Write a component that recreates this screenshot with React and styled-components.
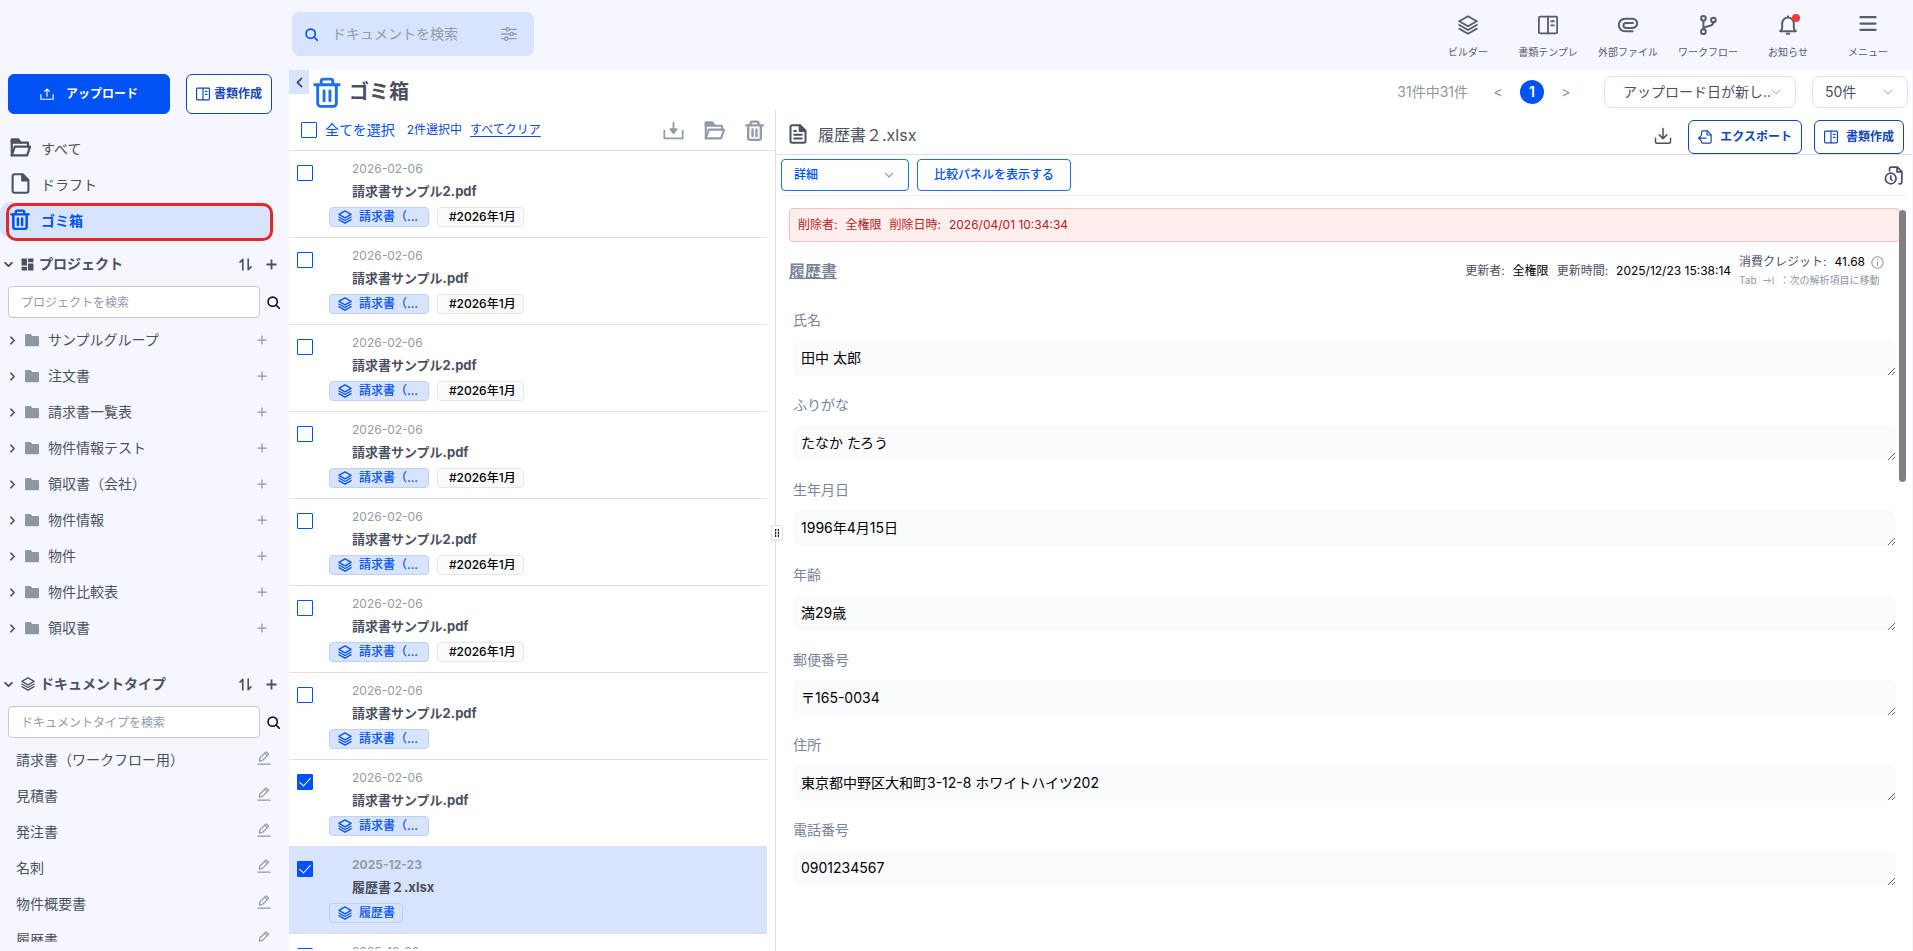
import React, { useState } from "react"
import styled, { createGlobalStyle, css } from "styled-components"

const GlobalStyle = createGlobalStyle`
  * {
    box-sizing: border-box;
  }
  body {
    margin: 0;
    background: #f5f6ff;
    color: #4b5162;
    font-family: Inter, "Noto Sans CJK JP", sans-serif;
    font-size: 14px;
    line-height: 20px;
  }
  button, input, select, textarea {
    font: inherit;
    color: inherit;
  }
  button {
    padding: 0;
    border: none;
    background: none;
    cursor: pointer;
  }
  a {
    color: inherit;
    text-decoration: none;
  }
  h1, h2, p, ul {
    margin: 0;
    padding: 0;
  }
  svg {
    display: block;
    flex: none;
  }
`

/* ---------- icons ---------- */

const Svg = ({ size = 20, w = 2, box = "0 0 24 24", children, ...rest }) => (
  <svg
    width={size}
    height={size}
    viewBox={box}
    fill="none"
    stroke="currentColor"
    strokeWidth={w}
    strokeLinecap="round"
    strokeLinejoin="round"
    aria-hidden="true"
    {...rest}
  >
    {children}
  </svg>
)

const LayersIcon = (p) => (
  <Svg {...p}>
    <path d="M12 1.5 22.5 7.5 12 13.5 1.5 7.5z" />
    <path d="M1.5 12 12 18l10.5-6" />
    <path d="M1.5 16.5 12 22.5l10.5-6" />
  </Svg>
)

const TemplateIcon = (p) => (
  <Svg {...p}>
    <rect x="1" y="2" width="22" height="20" rx="1.5" />
    <path d="M12 2v20M16 7.5h3M16 12.5h3" />
  </Svg>
)

const ClipIcon = (p) => (
  <Svg {...p}>
    <path d="M17.5 19.5H8.5a7.5 7.5 0 0 1 0-15h9a5 5 0 0 1 0 11H9.5a3 3 0 0 1 0-6H18" />
  </Svg>
)

const BranchIcon = (p) => (
  <Svg {...p}>
    <circle cx="6.5" cy="4" r="2.8" />
    <circle cx="6.5" cy="20" r="2.8" />
    <circle cx="18.5" cy="6" r="2.8" />
    <path d="M6.5 7v10M18.5 9c0 6-12 3-12 8" />
  </Svg>
)

const BellIcon = (p) => (
  <Svg {...p}>
    <path d="M2.5 19.5h19c-1.6-1-2.5-2.5-2.5-4.5V10a7 7 0 0 0-14 0v5c0 2-.9 3.5-2.5 4.5zM12 3V1.5M10.5 22.5h3" />
  </Svg>
)

const MenuIcon = (p) => (
  <Svg {...p}>
    <path d="M2 3.5h20M2 12h20M2 20.5h20" />
  </Svg>
)

const SearchIcon = (p) => (
  <Svg {...p}>
    <circle cx="10.5" cy="10.5" r="8.5" />
    <path d="m17 17 5.5 5.5" />
  </Svg>
)

const SlidersIcon = (p) => (
  <Svg {...p}>
    <path d="M1 5h6M13 5h10M1 12h12M19 12h4M1 19h4M11 19h12" />
    <circle cx="10" cy="5" r="2.5" />
    <circle cx="16" cy="12" r="2.5" />
    <circle cx="8" cy="19" r="2.5" />
  </Svg>
)

const UploadIcon = (p) => (
  <Svg {...p}>
    <path d="M1.5 13v8h21v-8M12 16V4M8 7.5 12 3.5l4 4" />
  </Svg>
)

const DownloadIcon = (p) => (
  <Svg {...p}>
    <path d="M2 15v4.5a2 2 0 0 0 2 2h16a2 2 0 0 0 2-2V15M12 2v13M7 10.5l5 5 5-5" />
  </Svg>
)

const TrayIcon = (p) => (
  <Svg {...p}>
    <path d="M1.5 12v9h21v-9M12 3v10" />
    <path d="M8.5 10.5h7L12 15z" fill="currentColor" />
  </Svg>
)

const OpenFolderIcon = (p) => (
  <Svg {...p}>
    <path d="M2 21V3h7.5l2.5 3.5h8.5V11" />
    <path d="M2 21h17.5l3.500-10H5.500L2 21z" />
    <path d="M2 3h7.500l2.500 3.500H2z" fill="currentColor" />
  </Svg>
)

const FileIcon = ({ lined, ...p }) => (
  <Svg {...p}>
    <path d="M5 1.5h9.5L21 8v12.5a2 2 0 0 1-2 2H5a2 2 0 0 1-2-2v-17a2 2 0 0 1 2-2z" />
    <path d="M14 2v6.5h6.5" />
    <path d="M14.5 2 20.5 8h-6z" fill="currentColor" />
    {lined && <path d="M7.5 8.5h2M7.5 13h9M7.5 17.5h9" />}
  </Svg>
)

const TrashIcon = ({ width, height, ...p }) => (
  <Svg {...p} width={width} height={height} box="0 0 24 28" preserveAspectRatio="none">
    <path d="M1.5 7h21M7 6.5V4a2 2 0 0 1 2-2h6a2 2 0 0 1 2 2v2.5" />
    <path d="M4 7.5V24a2.500 2.500 0 0 0 2.500 2.500h11A2.500 2.500 0 0 0 20 24V7.500M9.500 12.500v9M14.500 12.500v9" />
  </Svg>
)

const GridIcon = (p) => (
  <Svg {...p} stroke="none" fill="currentColor">
    <path d="M1 1h10v13H1zM13 1h10v7H13zM1 16h10v7H1zM13 10h10v13H13z" />
  </Svg>
)

const SortIcon = (p) => (
  <Svg {...p}>
    <path d="M7 22V2.5M2 7.5l5-5M17 2v19.5M22 16.5l-5 5" />
  </Svg>
)

const PlusIcon = (p) => (
  <Svg {...p} strokeLinecap="butt">
    <path d="M12 1v22M1 12h22" />
  </Svg>
)

const ChevronIcon = ({ dir = "down", ...p }) => {
  const paths = {
    down: "M3 7.5l9 9 9-9",
    left: "M16.5 3l-9 9 9 9",
    right: "M7.5 3l9 9-9 9",
  }
  return (
    <Svg {...p}>
      <path d={paths[dir]} />
    </Svg>
  )
}

const FolderIcon = (p) => (
  <Svg {...p} stroke="none" fill="currentColor">
    <path d="M2 1.5h7.5l3 3.5H22a2 2 0 0 1 2 2v13.5a2 2 0 0 1-2 2H2a2 2 0 0 1-2-2v-17a2 2 0 0 1 2-2z" />
  </Svg>
)

const PencilIcon = (p) => (
  <Svg {...p}>
    <path d="M1.5 22.500h21M4 17.500l1-5.500L15.500 1.500l4.500 4L9.500 16zM13 4l4.500 4" />
  </Svg>
)

const ExportIcon = (p) => (
  <Svg {...p}>
    <path d="M6 9V3.5A2 2 0 0 1 8 1.5h8L22.5 8v12.5a2 2 0 0 1-2 2H8a2 2 0 0 1-2-2V19" />
    <path d="M15.5 2v6.5h6.5M14 14H1.5M5 10l-4 4 4 4" />
  </Svg>
)

const HistoryIcon = (p) => (
  <Svg {...p}>
    <path d="M7 6V3.5a2 2 0 0 1 2-2h8L22.5 7v13.5a2 2 0 0 1-2 2H19M16.5 2v5.5h6" />
    <circle cx="8.5" cy="15.8" r="6.7" />
    <path d="M8.5 12.5v3.5l1.5 2" />
  </Svg>
)

const InfoIcon = (p) => (
  <Svg {...p}>
    <circle cx="12" cy="12" r="10.5" />
    <path d="M12 11v6.5M12 6.5v.5" />
  </Svg>
)

const TabIcon = (p) => (
  <Svg {...p}>
    <path d="M1 12h15M11 7l5 5-5 5M22 4v16" />
  </Svg>
)

/* ---------- layout ---------- */

const Page = styled.div`
  display: flex;
  flex-direction: column;
  height: 100vh;
  overflow: hidden;
`
const Header = styled.header`
  display: flex;
  align-items: center;
  justify-content: space-between;
  height: 70px;
  padding: 0 5px 2px 292px;
  flex: none;
`
const Body = styled.div`
  display: flex;
  flex: 1;
  min-height: 0;
`

/* ---------- header ---------- */

const GlobalSearch = styled.label`
  display: flex;
  align-items: center;
  width: 242px;
  height: 44px;
  padding: 0 17px 0 13px;
  border-radius: 8px;
  background: #d8e4fd;
  color: #0052f5;

  input {
    flex: 1;
    min-width: 0;
    margin-left: 12px;
    border: none;
    outline: none;
    background: transparent;
    color: #4b5162;
  }
  input::placeholder {
    color: #939aa9;
  }
  button {
    color: #939aa9;
  }
`
const TopNav = styled.nav`
  display: flex;
`
const TopLink = styled.a`
  position: relative;
  display: flex;
  flex-direction: column;
  align-items: center;
  gap: 10px;
  width: 80px;
  padding-top: 5px;
  font-size: 10px;
  line-height: 14px;
  color: #565d6d;
`
const RedDot = styled.span`
  position: absolute;
  top: 4px;
  left: 44px;
  width: 8px;
  height: 8px;
  border-radius: 50%;
  background: #f23b3b;
`

/* ---------- sidebar ---------- */

const Sidebar = styled.aside`
  display: flex;
  flex-direction: column;
  width: 289px;
  padding: 4px 0 9px;
  flex: none;
`
const SideButtons = styled.div`
  display: flex;
  justify-content: space-between;
  gap: 16px;
  padding: 0 17px 0 8px;
  margin-bottom: 16px;
`
const ActionButton = styled.button`
  display: flex;
  align-items: center;
  justify-content: center;
  gap: ${(p) => p.$gap || 8}px;
  height: ${(p) => p.$height || 34}px;
  padding: 0 9px;
  border: 1px solid #1148b8;
  border-radius: 6px;
  background: #fff;
  color: #1148b8;
  font-size: 12px;
  font-weight: 700;
  white-space: nowrap;

  ${(p) =>
    p.$primary &&
    css`
      flex: 1;
      border-color: #0052f5;
      background: #0052f5;
      color: #fff;
    `}
`
const NavItem = styled.a`
  position: relative;
  display: flex;
  align-items: center;
  height: 36px;
  margin-right: 17px;
  padding: 2px 0 0 10px;

  span {
    width: 31px;
    margin-bottom: 4px;
  }

  ${(p) =>
    p.$active &&
    css`
      border-radius: 10px;
      background: #d8e4fd;
      color: #0052f5;
      font-weight: 700;

      &::after {
        content: "";
        position: absolute;
        inset: 1px -1px -3px 6px;
        border: 3px solid #e02826;
        border-radius: 10px;
      }
    `}
`
const SectionHead = styled.div`
  display: flex;
  align-items: center;
  height: 28px;
  margin: ${(p) => p.$top}px 12px 8px 4px;
  flex: none;

  h2 {
    flex: 1;
    margin-left: 5px;
    font-size: 14px;
    line-height: 20px;
    font-weight: 700;
  }
  button + button {
    margin-left: 14px;
  }
`
const FoldButton = styled.button`
  margin-right: 8px;
`
const SearchRow = styled.div`
  display: flex;
  align-items: center;
  gap: 7px;
  padding: 0 9px 0 8px;
  margin-bottom: 4px;
  flex: none;

  input {
    flex: 1;
    min-width: 0;
    height: 32px;
    padding: 0 12px;
    border: 1px solid #c5cad3;
    border-radius: 4px;
    background: #fff;
    font-size: 12px;
  }
  input::placeholder {
    color: #939aa9;
  }
  button {
    color: #111;
  }
`
const SideList = styled.ul`
  list-style: none;
  overflow: hidden;
  ${(p) => p.$fill && "flex: 1;"}
`
const SideRow = styled.li`
  display: flex;
  align-items: center;
  height: 36px;
  padding: 0 ${(p) => p.$right}px 0 ${(p) => p.$left}px;

  a {
    flex: 1;
    margin-left: ${(p) => (p.$tree ? 9 : 0)}px;
  }
  button {
    color: #8f96a3;
    ${(p) => !p.$tree && "margin-bottom: 4px;"}
  }
`
const FolderMark = styled.span`
  margin-left: 8px;
  color: #8f96a3;
`
const Twisty = styled.button`
  && {
    color: #4b5162;
  }
`

/* ---------- main ---------- */

const Main = styled.main`
  display: flex;
  flex-direction: column;
  flex: 1;
  min-width: 0;
  margin-right: 1px;
  background: #fff;
`
const TitleBar = styled.div`
  display: flex;
  height: 40px;
  flex: none;
`
const TitleContent = styled.div`
  display: flex;
  align-items: center;
  flex: 1;
  padding: 4px 4px 0;

  h1 {
    flex: 1;
    margin-left: 8px;
    font-size: 20px;
    line-height: 28px;
    font-weight: 700;
  }
`
const CollapseButton = styled.button`
  display: flex;
  align-items: center;
  justify-content: center;
  width: 20px;
  height: 24px;
  background: #d8e4fd;
`
const BlueMark = styled.span`
  color: #1f6fe8;
`
const Pager = styled.div`
  display: flex;
  align-items: center;
  gap: 12px;
  margin-right: 28px;
  color: #8f96a3;

  span {
    margin-right: 8px;
  }
  button {
    width: 20px;
    height: 24px;
    font-size: 14px;
  }
`
const CurrentPage = styled.button`
  && {
    width: 24px;
    border-radius: 50%;
    background: #0052f5;
    color: #fff;
    font-weight: 600;
  }
`
const SelectBox = styled.div`
  display: grid;
  align-items: center;
  width: ${(p) => p.$width}px;
  height: 32px;
  flex: none;

  select, svg {
    grid-area: 1 / 1;
  }
  select {
    width: 100%;
    height: 32px;
    padding: 0 ${(p) => p.$pad}px;
    appearance: none;
    background: #fff;
    border: 1px solid ${(p) => (p.$blue ? "#1f6fe8" : "#dfe1e6")};
    border-radius: ${(p) => (p.$blue ? 4 : 8)}px;
    color: ${(p) => (p.$blue ? "#0052f5" : "#4b5162")};
    font-size: ${(p) => (p.$blue ? 12 : 14)}px;
    font-weight: ${(p) => (p.$blue ? 500 : 400)};
  }
  svg {
    justify-self: end;
    margin-right: 15px;
    color: ${(p) => (p.$blue ? "#6a9bf0" : "#8f96a3")};
    pointer-events: none;
  }
  & + & {
    margin-left: 16px;
  }
`
const Columns = styled.div`
  display: flex;
  flex: 1;
  min-height: 0;
`

/* ---------- document list ---------- */

const ListPane = styled.section`
  position: relative;
  display: flex;
  flex-direction: column;
  width: 487px;
  border-right: 1px solid #dfe1e6;
  flex: none;
`
const ListTools = styled.div`
  display: flex;
  align-items: center;
  height: 41px;
  padding: 0 11px 0 12px;
  border-bottom: 1px solid #dfe1e6;
  flex: none;
`
const Check = styled.input.attrs({ type: "checkbox" })`
  display: flex;
  align-items: flex-start;
  justify-content: center;
  width: 16px;
  height: 16px;
  margin: 0;
  appearance: none;
  border: 1px solid #0052f5;
  border-radius: 1px;
  background: #fff;
  flex: none;

  &:checked {
    background: #0052f5;
  }
  &:checked::after {
    content: "";
    width: 5px;
    height: 10px;
    border: solid #fff;
    border-width: 0 1px 1px 0;
    transform: rotate(42deg);
  }
`
const SelectAll = styled.label`
  display: flex;
  align-items: center;
  gap: 8px;
  margin-right: 12px;
  color: #0052f5;
`
const Selected = styled.span`
  flex: 1;
  font-size: 12px;
  color: #1148d8;

  button {
    margin-left: 8px;
    text-decoration: underline;
    text-underline-offset: 2px;
  }
`
const ToolIcons = styled.div`
  display: flex;
  align-items: center;
  gap: 20px;
  color: #939aa9;
`
const Documents = styled.ul`
  flex: 1;
  min-height: 0;
  margin: 0 8px 2px 0;
  overflow: hidden;
  list-style: none;
`
const Doc = styled.li`
  display: flex;
  height: 87px;
  padding: 10px 8px 0;
  border-bottom: 1px solid #dfe1e6;
  background: ${(p) => (p.$active ? "#d8e4fd" : "#fff")};

  ${Check} {
    margin-top: 4px;
  }
  time, strong {
    display: block;
    margin-left: 23px;
  }
  time {
    font-size: 12px;
    line-height: 16px;
    font-weight: ${(p) => (p.$active ? 700 : 400)};
    color: #939aa9;
  }
  strong {
    margin-top: 4px;
    font-size: 13px;
  }
`
const DocInfo = styled.div`
  margin-left: 16px;
`
const Tags = styled.div`
  display: flex;
  gap: 8px;
  margin-top: 6px;
`
const Tag = styled.span`
  display: flex;
  align-items: center;
  gap: 7px;
  height: 20px;
  padding: 0 ${(p) => (p.$wide ? 10 : 7)}px 0 ${(p) => (p.$type ? 8 : 11)}px;
  border: 1px solid ${(p) => (p.$type ? "#bfd0f8" : "#e4e6ea")};
  border-radius: 4px;
  background: ${(p) => (p.$type ? "#d8e4fd" : "#fafbfc")};
  color: ${(p) => (p.$type ? "#0052f5" : "#000")};
  font-size: 12px;
  font-weight: 500;
  line-height: 18px;
`
const DragHandle = styled.span`
  position: absolute;
  top: 415px;
  right: -8px;
  z-index: 1;
  display: flex;
  align-items: center;
  justify-content: center;
  width: 12px;
  height: 16px;
  border: 1px solid #dfe1e6;
  border-radius: 2px;
  background: #fff;
  color: #222;
`

/* ---------- document detail ---------- */

const Detail = styled.section`
  display: flex;
  flex-direction: column;
  flex: 1;
  min-width: 0;
  margin-left: 1px;
`
const DetailHead = styled.div`
  display: flex;
  align-items: flex-end;
  height: 45px;
  padding: 0 8px 0 11px;
  border-bottom: 1px solid #dfe1e6;
  flex: none;

  h2 {
    flex: 1;
    margin-left: 10px;
    font-size: 16px;
    line-height: 38px;
    font-weight: 400;
  }
  button + button {
    margin-left: 12px;
  }
`
const HeadIcon = styled.span`
  display: flex;
  align-items: center;
  height: 40px;
`
const DownloadButton = styled.button`
  height: 36px;
  margin-right: 4px;
`
const DetailTools = styled.div`
  display: flex;
  align-items: center;
  gap: 8px;
  height: 41px;
  margin: 0 5px 0 4px;
  border-bottom: 1px solid #eef0f3;
  flex: none;
`
const OutlineButton = styled.button`
  height: 32px;
  padding: 0 16px;
  border: 1px solid #1f6fe8;
  border-radius: 4px;
  background: #fff;
  color: #0052f5;
  font-size: 12px;
  font-weight: 500;
`
const HistoryButton = styled.button`
  margin: 0 4px 0 auto;
`
const DetailBody = styled.div`
  position: relative;
  flex: 1;
  min-height: 0;
  padding: 12px 12px 0;
  overflow: hidden;
`
const ScrollThumb = styled.span`
  position: absolute;
  top: 14px;
  right: 6px;
  width: 7px;
  height: 272px;
  border-radius: 4px;
  background: #808080;
`
const DeletedNotice = styled.p`
  display: flex;
  align-items: center;
  gap: 8px;
  height: 34px;
  padding: 0 8px;
  border: 1px solid #fbbcbc;
  border-radius: 4px;
  background: #feeeee;
  color: #b91c1c;
  font-size: 12px;
`
const Meta = styled.div`
  display: flex;
  align-items: center;
  gap: 8px;
  height: 58px;
  margin-bottom: 9px;
  padding-right: 16px;
  font-size: 12px;

  h2 {
    flex: 1;
    color: #7a8499;
    font-size: 16px;
    line-height: 24px;
    font-weight: 700;
    text-decoration: underline;
  }
  b {
    color: #000;
    font-weight: 400;
  }
`
const Credit = styled.div`
  p {
    display: flex;
    align-items: center;
    gap: 6px;
    line-height: 18px;
  }
  b {
    margin-left: 2px;
  }
  p + p {
    color: #8f96a3;
    font-size: 10px;
  }
  svg {
    color: #939aa9;
  }
`
const Field = styled.div`
  padding: 0 4px;
  margin-bottom: 18px;

  label {
    display: block;
    margin-bottom: 9px;
    line-height: 22px;
    color: #7a8499;
  }
  textarea {
    display: block;
    width: 100%;
    height: 36px;
    padding: 7px 8px;
    border: none;
    border-radius: 8px;
    outline: none;
    background: #fafbfd;
    color: #000;
    line-height: 22px;
    resize: vertical;
    overflow: hidden;
  }
`

/* ---------- data ---------- */

const topLinks = [
  { label: "ビルダー", icon: <LayersIcon w={2.4} /> },
  { label: "書類テンプレ", icon: <TemplateIcon w={2.2} /> },
  { label: "外部ファイル", icon: <ClipIcon w={2.4} /> },
  { label: "ワークフロー", icon: <BranchIcon w={2.4} /> },
  { label: "お知らせ", icon: <BellIcon w={2.4} />, dot: true },
  { label: "メニュー", icon: <MenuIcon width={18} w={3} box="0 2 24 24" /> },
]

const projects = [
  "サンプルグループ",
  "注文書",
  "請求書一覧表",
  "物件情報テスト",
  "領収書（会社）",
  "物件情報",
  "物件",
  "物件比較表",
  "領収書",
]

const docTypes = ["請求書（ワークフロー用）", "見積書", "発注書", "名刺", "物件概要書", "履歴書"]

const invoice = { date: "2026-02-06", type: "請求書（...", wide: true }

const initialDocs = [
  { ...invoice, id: 1, name: "請求書サンプル2.pdf", tag: "#2026年1月" },
  { ...invoice, id: 2, name: "請求書サンプル.pdf", tag: "#2026年1月" },
  { ...invoice, id: 3, name: "請求書サンプル2.pdf", tag: "#2026年1月" },
  { ...invoice, id: 4, name: "請求書サンプル.pdf", tag: "#2026年1月" },
  { ...invoice, id: 5, name: "請求書サンプル2.pdf", tag: "#2026年1月" },
  { ...invoice, id: 6, name: "請求書サンプル.pdf", tag: "#2026年1月" },
  { ...invoice, id: 7, name: "請求書サンプル2.pdf" },
  { ...invoice, id: 8, name: "請求書サンプル.pdf" },
  { id: 9, date: "2025-12-23", name: "履歴書２.xlsx", type: "履歴書", active: true },
  { id: 10, date: "2025-12-23", name: "履歴書.xlsx", type: "履歴書" },
]

const fields = [
  ["氏名", "田中 太郎"],
  ["ふりがな", "たなか たろう"],
  ["生年月日", "1996年4月15日"],
  ["年齢", "満29歳"],
  ["郵便番号", "〒165-0034"],
  ["住所", "東京都中野区大和町3-12-8 ホワイトハイツ202"],
  ["電話番号", "0901234567"],
]

/* ---------- parts ---------- */

const SideSection = ({ title, icon, top, placeholder, children }) => (
  <>
    <SectionHead $top={top}>
      <FoldButton aria-label="折りたたむ">
        <ChevronIcon size={9} w={5} />
      </FoldButton>
      {icon}
      <h2>{title}</h2>
      <button aria-label="並び替え">
        <SortIcon size={13} w={3} />
      </button>
      <button aria-label="追加">
        <PlusIcon size={11} w={4} />
      </button>
    </SectionHead>
    <SearchRow>
      <input type="text" aria-label={placeholder} placeholder={placeholder} />
      <button aria-label="検索">
        <SearchIcon size={13} w={3} />
      </button>
    </SearchRow>
    {children}
  </>
)

const DocRow = ({ doc, checked, onToggle }) => (
  <Doc $active={doc.active}>
    <Check aria-label={doc.name} checked={checked} onChange={() => onToggle(doc.id)} />
    <DocInfo>
      <time>{doc.date}</time>
      <strong>{doc.name}</strong>
      <Tags>
        <Tag $type $wide={doc.wide}>
          <LayersIcon size={14} />
          {doc.type}
        </Tag>
        {doc.tag && <Tag>{doc.tag}</Tag>}
      </Tags>
    </DocInfo>
  </Doc>
)

export default function App() {
  const [checked, setChecked] = useState([8, 9])

  const toggle = (id) => {
    setChecked(checked.includes(id) ? checked.filter((c) => c !== id) : checked.concat(id))
  }

  return (
    <Page>
      <GlobalStyle />
      <Header>
        <GlobalSearch>
          <SearchIcon size={13} w={3} />
          <input type="text" placeholder="ドキュメントを検索" />
          <button aria-label="絞り込み">
            <SlidersIcon size={16} />
          </button>
        </GlobalSearch>
        <TopNav>
          {topLinks.map((link) => (
            <TopLink href="#" key={link.label}>
              {link.icon}
              {link.dot && <RedDot />}
              {link.label}
            </TopLink>
          ))}
        </TopNav>
      </Header>

      <Body>
        <Sidebar>
          <SideButtons>
            <ActionButton $primary $height={40} $gap={12}>
              <UploadIcon size={14} />
              アップロード
            </ActionButton>
            <ActionButton $height={40} $gap={4}>
              <TemplateIcon size={14} />
              書類作成
            </ActionButton>
          </SideButtons>
          <nav>
            <NavItem href="#">
              <span><OpenFolderIcon size={21} w={2.5} /></span>
              すべて
            </NavItem>
            <NavItem href="#">
              <span><FileIcon size={21} w={2.4} /></span>
              ドラフト
            </NavItem>
            <NavItem href="#" $active>
              <span><TrashIcon width={20} height={21} w={3} /></span>
              ゴミ箱
            </NavItem>
          </nav>

          <SideSection
            title="プロジェクト"
            icon={<GridIcon size={13} />}
            top={12}
            placeholder="プロジェクトを検索"
          >
            <SideList>
              {projects.map((name) => (
                <SideRow key={name} $tree $left={8} $right={22}>
                  <Twisty aria-label="開く">
                    <ChevronIcon size={9} w={4} dir="right" />
                  </Twisty>
                  <FolderMark><FolderIcon size={14} /></FolderMark>
                  <a href="#">{name}</a>
                  <button aria-label="追加">
                    <PlusIcon size={10} w={3} />
                  </button>
                </SideRow>
              ))}
            </SideList>
          </SideSection>

          <SideSection
            title="ドキュメントタイプ"
            icon={<LayersIcon size={14} />}
            top={24}
            placeholder="ドキュメントタイプを検索"
          >
            <SideList $fill>
              {docTypes.map((name) => (
                <SideRow key={name} $left={16} $right={18}>
                  <a href="#">{name}</a>
                  <button aria-label="編集">
                    <PencilIcon size={14} />
                  </button>
                </SideRow>
              ))}
            </SideList>
          </SideSection>
        </Sidebar>

        <Main>
          <TitleBar>
            <CollapseButton aria-label="閉じる">
              <ChevronIcon size={11} w={4} dir="left" />
            </CollapseButton>
            <TitleContent>
              <BlueMark><TrashIcon width={28} height={31} w={2.5} /></BlueMark>
              <h1>ゴミ箱</h1>
              <Pager>
                <span>31件中31件</span>
                <button>&lt;</button>
                <CurrentPage>1</CurrentPage>
                <button>&gt;</button>
              </Pager>
              <SelectBox $width={192} $pad={18}>
                <select aria-label="並び順">
                  <option>アップロード日が新し..</option>
                </select>
                <ChevronIcon size={10} />
              </SelectBox>
              <SelectBox $width={96} $pad={12}>
                <select aria-label="表示件数">
                  <option>50件</option>
                </select>
                <ChevronIcon size={10} />
              </SelectBox>
            </TitleContent>
          </TitleBar>

          <Columns>
            <ListPane>
              <ListTools>
                <SelectAll>
                  <Check
                    checked={checked.length === initialDocs.length}
                    onChange={(e) => setChecked(e.target.checked ? initialDocs.map((d) => d.id) : [])}
                  />
                  全てを選択
                </SelectAll>
                <Selected>
                  {checked.length}件選択中
                  <button onClick={() => setChecked([])}>すべてクリア</button>
                </Selected>
                <ToolIcons>
                  <button aria-label="ダウンロード"><TrayIcon size={21} /></button>
                  <button aria-label="移動"><OpenFolderIcon size={21} w={2.4} /></button>
                  <button aria-label="削除"><TrashIcon width={19} height={21} w={3} /></button>
                </ToolIcons>
              </ListTools>
              <Documents>
                {initialDocs.map((doc) => (
                  <DocRow key={doc.id} doc={doc} checked={checked.includes(doc.id)} onToggle={toggle} />
                ))}
              </Documents>
              <DragHandle>
                <svg width="4" height="8" fill="currentColor">
                  <path d="M0 0h1v2H0zM3 0h1v2H3zM0 3h1v2H0zM3 3h1v2H3zM0 6h1v2H0zM3 6h1v2H3z" stroke="currentColor" strokeWidth="0.5" />
                </svg>
              </DragHandle>
            </ListPane>

            <Detail>
              <DetailHead>
                <HeadIcon><FileIcon size={20} w={2.4} lined /></HeadIcon>
                <h2>履歴書２.xlsx</h2>
                <DownloadButton aria-label="ダウンロード"><DownloadIcon size={18} /></DownloadButton>
                <ActionButton>
                  <ExportIcon size={14} />
                  エクスポート
                </ActionButton>
                <ActionButton>
                  <TemplateIcon size={14} />
                  書類作成
                </ActionButton>
              </DetailHead>
              <DetailTools>
                <SelectBox $blue $width={128} $pad={12}>
                  <select aria-label="表示">
                    <option>詳細</option>
                  </select>
                  <ChevronIcon size={10} w={3} />
                </SelectBox>
                <OutlineButton>比較パネルを表示する</OutlineButton>
                <HistoryButton aria-label="履歴"><HistoryIcon size={19} w={2.2} /></HistoryButton>
              </DetailTools>
              <DetailBody>
                <DeletedNotice>
                  <span>削除者:</span>
                  <span>全権限</span>
                  <span>削除日時:</span>
                  <span>2026/04/01 10:34:34</span>
                </DeletedNotice>
                <Meta>
                  <h2>履歴書</h2>
                  <span>更新者:</span>
                  <b>全権限</b>
                  <span>更新時間:</span>
                  <b>2025/12/23 15:38:14</b>
                  <Credit>
                    <p>
                      消費クレジット:
                      <b>41.68</b>
                      <InfoIcon size={13} />
                    </p>
                    <p>
                      Tab
                      <TabIcon size={11} />
                      ：次の解析項目に移動
                    </p>
                  </Credit>
                </Meta>
                {fields.map(([label, value], i) => (
                  <Field key={label}>
                    <label htmlFor={"field" + i}>{label}</label>
                    <textarea id={"field" + i} rows={1} defaultValue={value} />
                  </Field>
                ))}
                <ScrollThumb />
              </DetailBody>
            </Detail>
          </Columns>
        </Main>
      </Body>
    </Page>
  )
}
